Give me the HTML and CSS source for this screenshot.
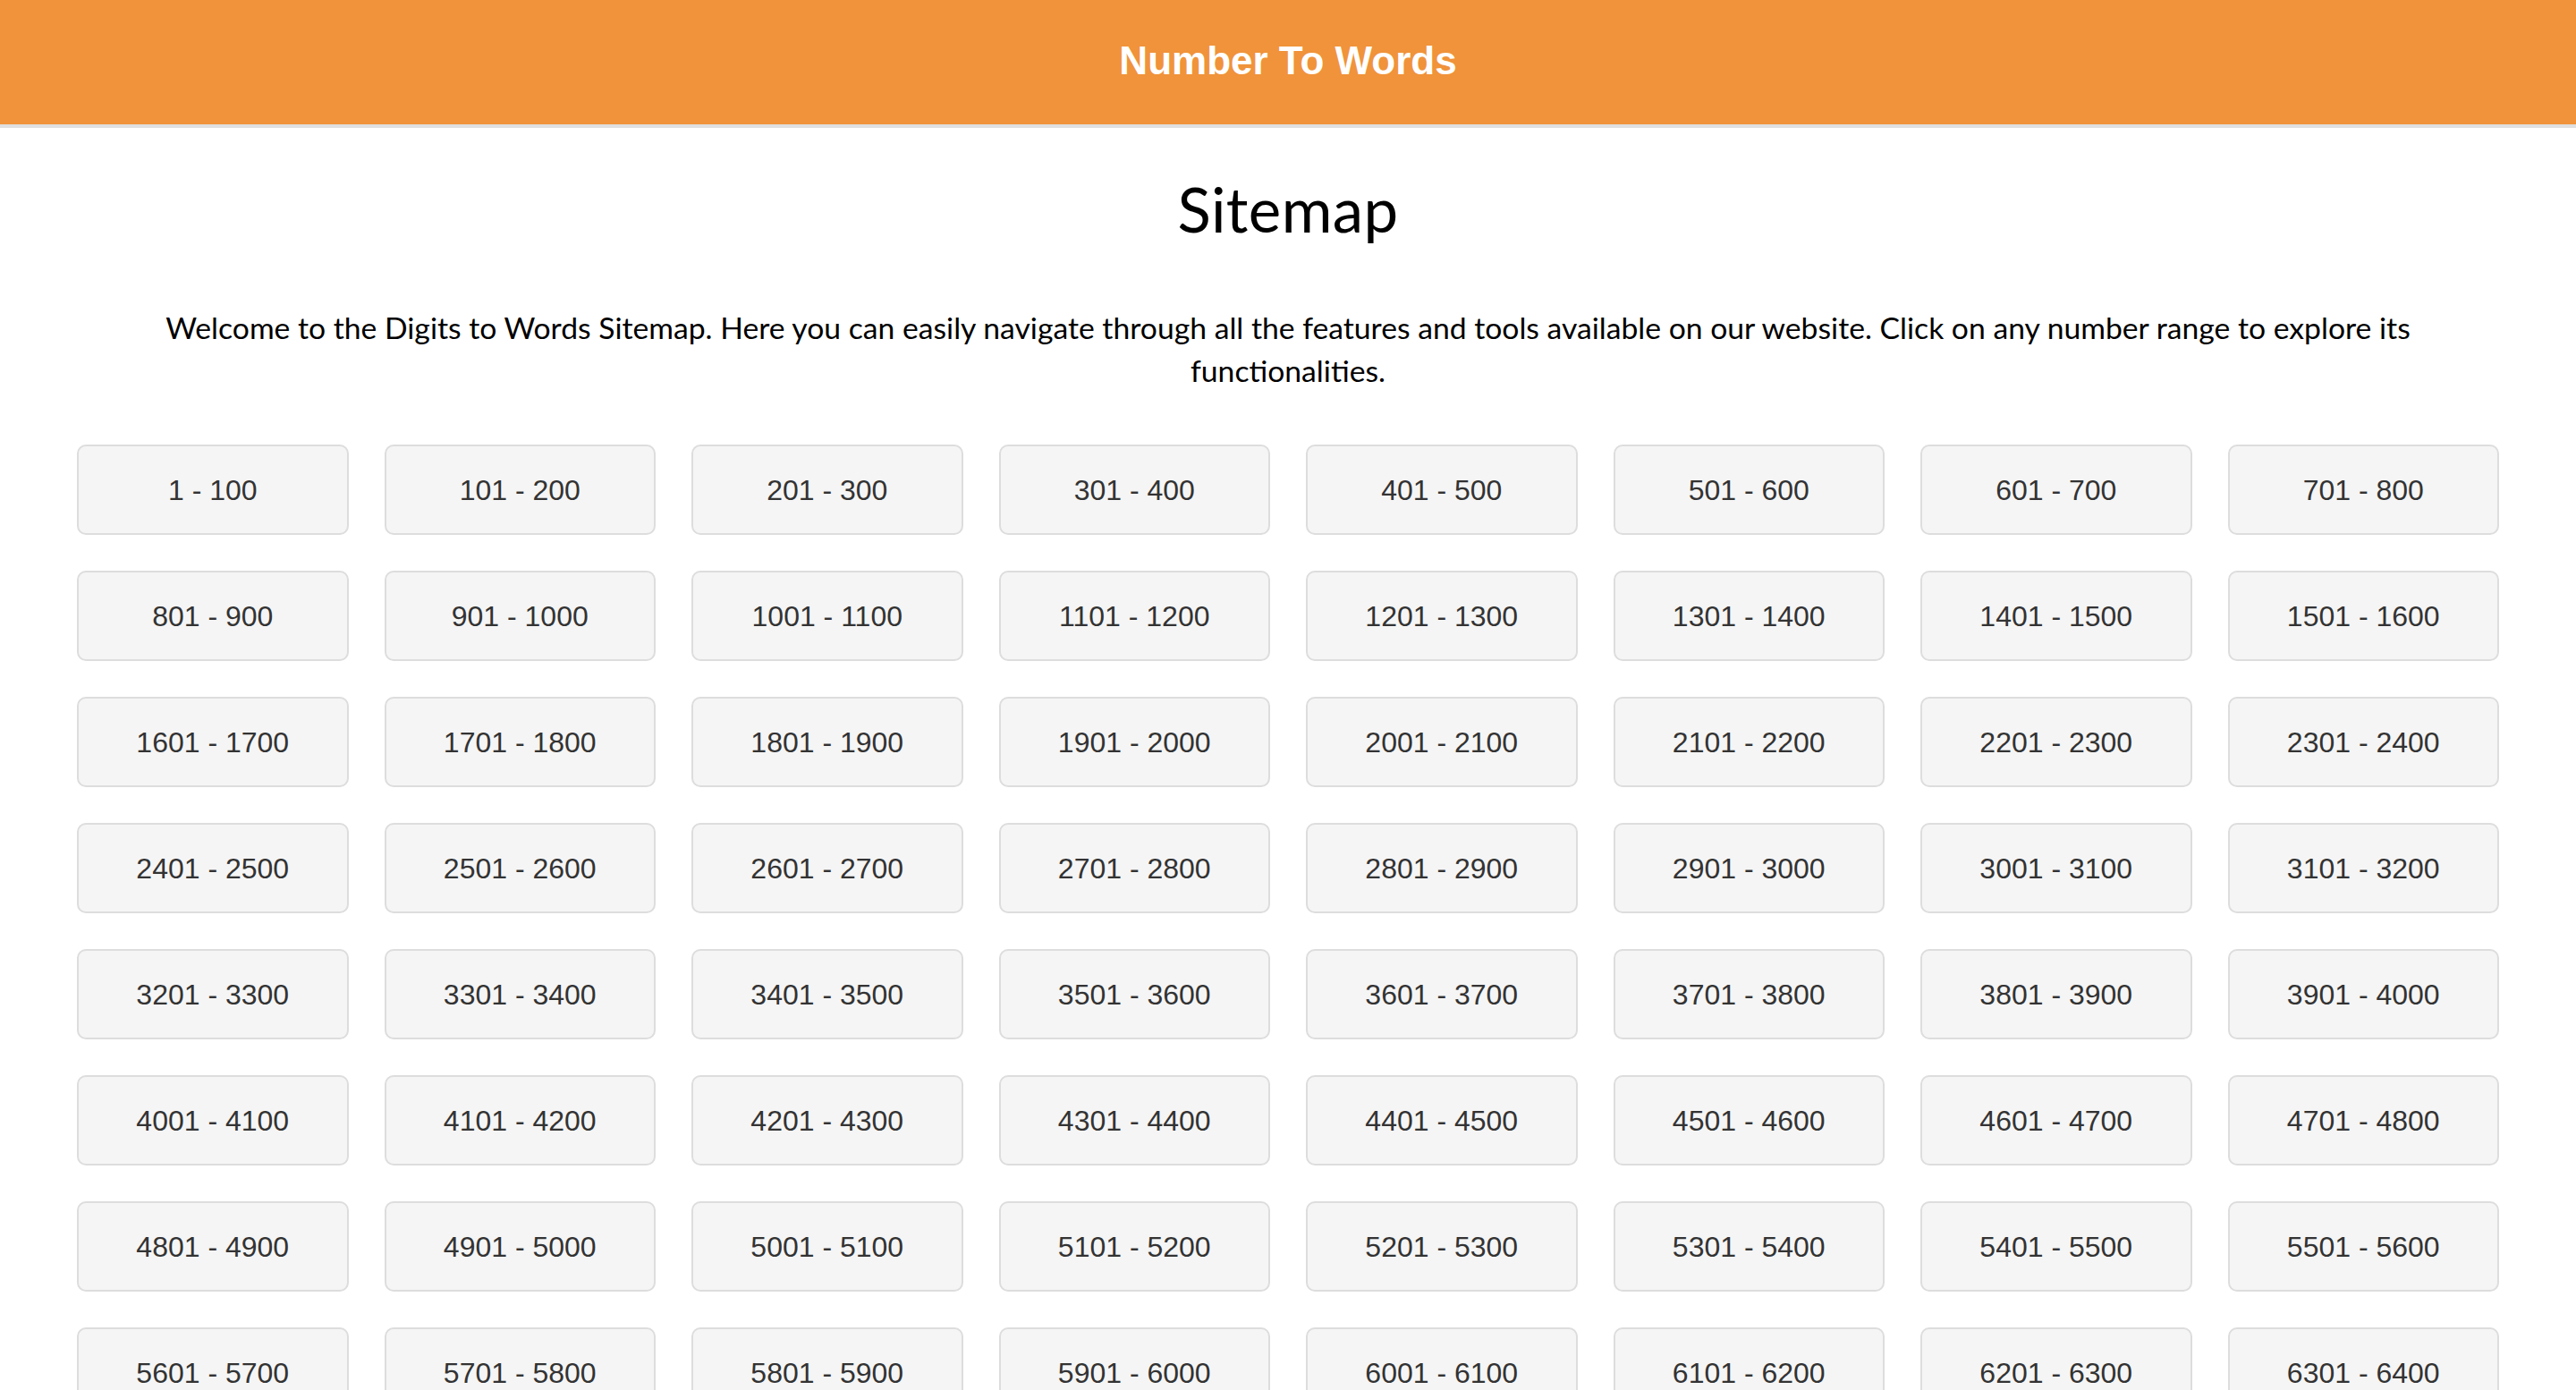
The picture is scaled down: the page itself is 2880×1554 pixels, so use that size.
FILE: index.html
```html
<!DOCTYPE html>
<html lang="en">
<head>
<meta charset="utf-8">
<title>Sitemap - Number To Words</title>
<link rel="stylesheet" href="styles.css">
</head>
<body>
<header class="site-header">
  <a class="brand" href="#">Number To Words</a>
</header>
<main class="content">
  <h1 class="page-title">Sitemap</h1>
  <p class="intro">Welcome to the Digits to Words Sitemap. Here you can easily navigate through all the features and tools available on our website. Click on any number range to explore its functionalities.</p>
  <nav class="range-grid">
    <a class="range" href="#">1 - 100</a>
    <a class="range" href="#">101 - 200</a>
    <a class="range" href="#">201 - 300</a>
    <a class="range" href="#">301 - 400</a>
    <a class="range" href="#">401 - 500</a>
    <a class="range" href="#">501 - 600</a>
    <a class="range" href="#">601 - 700</a>
    <a class="range" href="#">701 - 800</a>
    <a class="range" href="#">801 - 900</a>
    <a class="range" href="#">901 - 1000</a>
    <a class="range" href="#">1001 - 1100</a>
    <a class="range" href="#">1101 - 1200</a>
    <a class="range" href="#">1201 - 1300</a>
    <a class="range" href="#">1301 - 1400</a>
    <a class="range" href="#">1401 - 1500</a>
    <a class="range" href="#">1501 - 1600</a>
    <a class="range" href="#">1601 - 1700</a>
    <a class="range" href="#">1701 - 1800</a>
    <a class="range" href="#">1801 - 1900</a>
    <a class="range" href="#">1901 - 2000</a>
    <a class="range" href="#">2001 - 2100</a>
    <a class="range" href="#">2101 - 2200</a>
    <a class="range" href="#">2201 - 2300</a>
    <a class="range" href="#">2301 - 2400</a>
    <a class="range" href="#">2401 - 2500</a>
    <a class="range" href="#">2501 - 2600</a>
    <a class="range" href="#">2601 - 2700</a>
    <a class="range" href="#">2701 - 2800</a>
    <a class="range" href="#">2801 - 2900</a>
    <a class="range" href="#">2901 - 3000</a>
    <a class="range" href="#">3001 - 3100</a>
    <a class="range" href="#">3101 - 3200</a>
    <a class="range" href="#">3201 - 3300</a>
    <a class="range" href="#">3301 - 3400</a>
    <a class="range" href="#">3401 - 3500</a>
    <a class="range" href="#">3501 - 3600</a>
    <a class="range" href="#">3601 - 3700</a>
    <a class="range" href="#">3701 - 3800</a>
    <a class="range" href="#">3801 - 3900</a>
    <a class="range" href="#">3901 - 4000</a>
    <a class="range" href="#">4001 - 4100</a>
    <a class="range" href="#">4101 - 4200</a>
    <a class="range" href="#">4201 - 4300</a>
    <a class="range" href="#">4301 - 4400</a>
    <a class="range" href="#">4401 - 4500</a>
    <a class="range" href="#">4501 - 4600</a>
    <a class="range" href="#">4601 - 4700</a>
    <a class="range" href="#">4701 - 4800</a>
    <a class="range" href="#">4801 - 4900</a>
    <a class="range" href="#">4901 - 5000</a>
    <a class="range" href="#">5001 - 5100</a>
    <a class="range" href="#">5101 - 5200</a>
    <a class="range" href="#">5201 - 5300</a>
    <a class="range" href="#">5301 - 5400</a>
    <a class="range" href="#">5401 - 5500</a>
    <a class="range" href="#">5501 - 5600</a>
    <a class="range" href="#">5601 - 5700</a>
    <a class="range" href="#">5701 - 5800</a>
    <a class="range" href="#">5801 - 5900</a>
    <a class="range" href="#">5901 - 6000</a>
    <a class="range" href="#">6001 - 6100</a>
    <a class="range" href="#">6101 - 6200</a>
    <a class="range" href="#">6201 - 6300</a>
    <a class="range" href="#">6301 - 6400</a>
    <a class="range" href="#">6401 - 6500</a>
    <a class="range" href="#">6501 - 6600</a>
    <a class="range" href="#">6601 - 6700</a>
    <a class="range" href="#">6701 - 6800</a>
    <a class="range" href="#">6801 - 6900</a>
    <a class="range" href="#">6901 - 7000</a>
    <a class="range" href="#">7001 - 7100</a>
    <a class="range" href="#">7101 - 7200</a>
  </nav>
</main>
</body>
</html>
```

FILE: styles.css
```css
html, body {
  margin: 0;
  padding: 0;
  background: #ffffff;
}

body {
  font-family: "Lato", "Noto Sans", sans-serif;
  color: #000000;
}

.site-header {
  height: 135px;
  padding-bottom: 4px;
  background: #f0933a;
  border-bottom: 4px solid #e0e0e0;
  display: flex;
  align-items: center;
  justify-content: center;
}

.brand {
  font-family: "Liberation Sans", Arial, sans-serif;
  font-weight: bold;
  font-size: 44px;
  color: #ffffff;
  text-decoration: none;
}

.content {
  padding: 0 86px;
}

.page-title {
  margin: 50px 0 0;
  font-size: 69px;
  font-weight: 400;
  letter-spacing: 0.4px;
  line-height: 1.2;
  text-align: center;
}

.intro {
  margin: 66px 0 0;
  font-size: 33.7px;
  line-height: 48px;
  text-align: center;
}

.range-grid {
  margin-top: 59px;
  display: grid;
  grid-template-columns: repeat(8, 1fr);
  column-gap: 40px;
  row-gap: 40px;
}

.range {
  height: 101px;
  padding-top: 2px;
  box-sizing: border-box;
  display: flex;
  align-items: center;
  justify-content: center;
  background: #f5f5f5;
  border: 2px solid #dddddd;
  border-radius: 10px;
  font-family: "Liberation Sans", Arial, sans-serif;
  font-size: 32px;
  color: #333333;
  text-decoration: none;
}
```
